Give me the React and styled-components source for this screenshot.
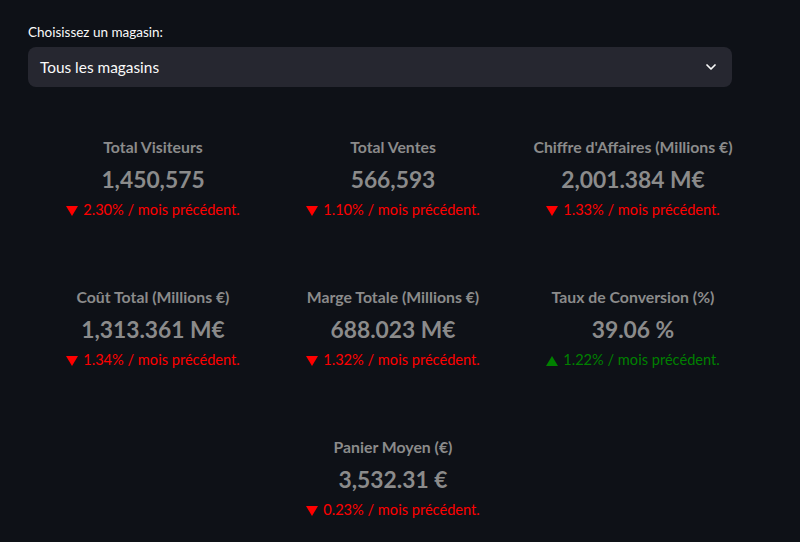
import React from 'react'
import styled, { createGlobalStyle } from 'styled-components'
import { ChevronDown } from 'lucide-react'

const metrics = [
  { title: 'Total Visiteurs', value: '1,450,575', delta: '2.30%', up: false },
  { title: 'Total Ventes', value: '566,593', delta: '1.10%', up: false },
  { title: "Chiffre d'Affaires (Millions €)", value: '2,001.384 M€', delta: '1.33%', up: false },
  { title: 'Coût Total (Millions €)', value: '1,313.361 M€', delta: '1.34%', up: false },
  { title: 'Marge Totale (Millions €)', value: '688.023 M€', delta: '1.32%', up: false },
  { title: 'Taux de Conversion (%)', value: '39.06 %', delta: '1.22%', up: true },
  { title: 'Panier Moyen (€)', value: '3,532.31 €', delta: '0.23%', up: false, col: 2 },
]

export default function App() {
  return (
    <>
      <Global />
      <Page>
        <Label>Choisissez un magasin:</Label>
        <Select>
          <span>Tous les magasins</span>
          <ChevronDown size={16} strokeWidth={2.6} />
        </Select>
        <Grid>
          {metrics.map(m => (
            <Card key={m.title} $col={m.col}>
              <Title>{m.title}</Title>
              <Value>{m.value}</Value>
              <Delta $up={m.up}>
                <Arrow $up={m.up} />
                {m.delta} / mois précédent.
              </Delta>
            </Card>
          ))}
        </Grid>
      </Page>
    </>
  )
}

/* ==== Styled ==== */
const Global = createGlobalStyle`
  html,body{margin:0;background:#0e1117;}
  body{font-family:Lato,"Liberation Sans",sans-serif;color:#fafafa;}
`
const Page = styled.div`width:800px;height:542px;box-sizing:border-box;padding:22px 0 0 28px;overflow:hidden;`
const Label = styled.div`font-size:13.5px;line-height:20px;margin-bottom:5px;color:#fafafa;`
const Select = styled.div`
  width:704px;height:40px;box-sizing:border-box;background:#262730;border-radius:8px;
  display:flex;align-items:center;justify-content:space-between;padding:0 13px 0 12px;
  font-size:15.4px;color:#fafafa;
  svg{color:#fafafa;}
`
const Grid = styled.div`
  display:grid;grid-template-columns:repeat(3,240px);grid-auto-rows:150px;
  margin:50px 0 0 5px;
`
const Card = styled.div`
  display:flex;flex-direction:column;align-items:center;text-align:center;
  ${p => p.$col ? `grid-column:${p.$col};` : ''}
`
const Title = styled.div`font-size:15.8px;font-weight:700;color:#8b8b8b;line-height:20px;`
const Value = styled.div`font-size:22.8px;font-weight:700;color:#8b8b8b;line-height:30px;margin-top:7px;`
const Delta = styled.div`
  display:flex;align-items:center;gap:5px;
  font-size:14.6px;line-height:20px;margin-top:6px;color:${p => p.$up ? '#008000' : '#ff0000'};
`
const Arrow = styled.span`
  width:0;height:0;border-left:6px solid transparent;border-right:6px solid transparent;
  ${p => p.$up ? 'border-bottom:10px solid currentColor;' : 'border-top:10px solid currentColor;'}
  margin-top:1px;
`
